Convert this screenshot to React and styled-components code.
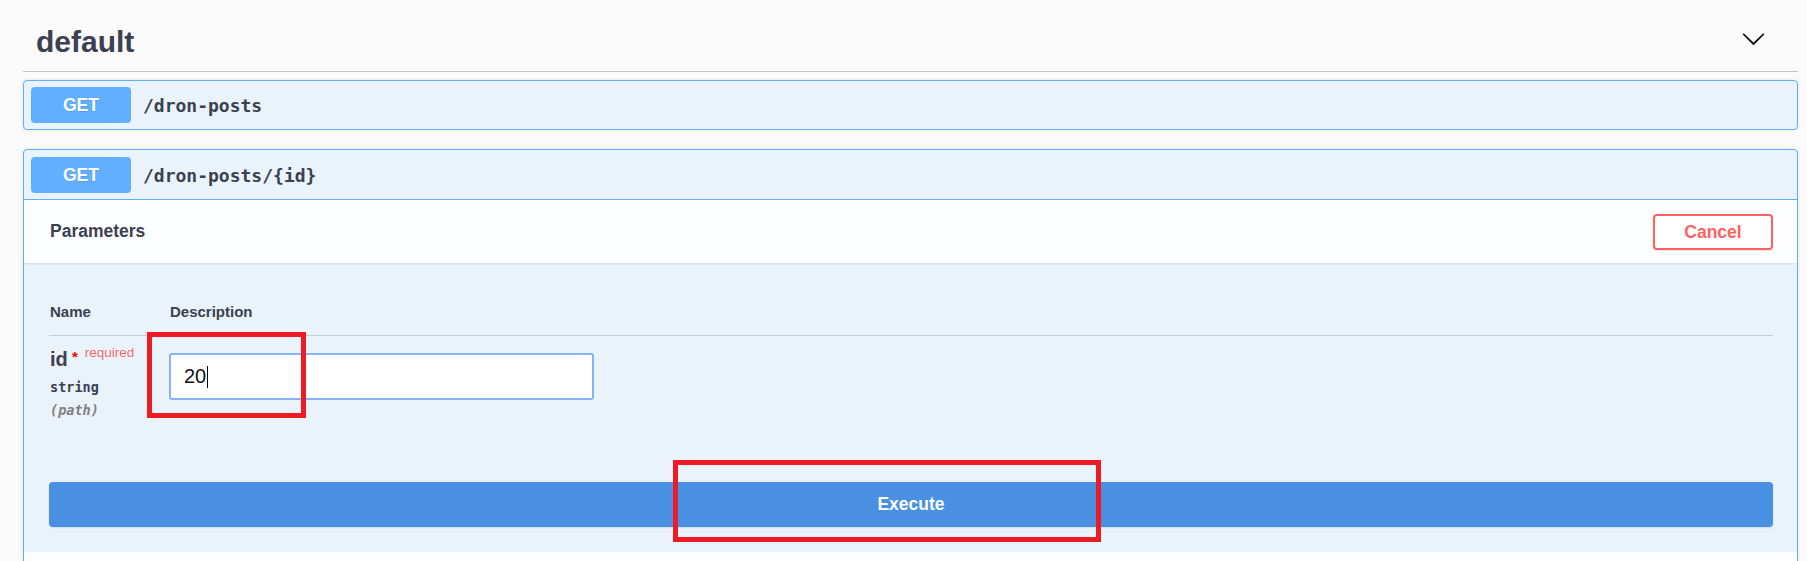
import React from 'react';
import styled, { createGlobalStyle } from 'styled-components';

const GlobalStyle = createGlobalStyle`
    html, body {
        margin: 0;
        padding: 0;
        overflow: hidden;
        background: #fafafa;
        font-family: "Liberation Sans", Arial, sans-serif;
        color: #3b4151;
    }
    * {
        box-sizing: border-box;
    }
`;

const params = [
    { name: 'id', type: 'string', location: '(path)', value: '20' },
];

export default function App() {
    return (
        <>
            <GlobalStyle />
            <Page>
                <Section>
                    <TagHeader>
                        <TagTitle>default</TagTitle>
                        <Arrow viewBox="0 0 20 20">
                            <path d="M17.418 6.109c.272-.268.709-.268.979 0s.271.701 0 .969l-7.908 7.83c-.27.268-.707.268-.979 0l-7.908-7.83c-.27-.268-.27-.701 0-.969.271-.268.709-.268.979 0L10 13.25l7.418-7.141z" />
                        </Arrow>
                    </TagHeader>

                    <OpBlock>
                        <Summary>
                            <Method>GET</Method>
                            <Path>/dron-posts</Path>
                        </Summary>
                    </OpBlock>

                    <OpBlock open>
                        <Summary open>
                            <Method>GET</Method>
                            <Path>/dron-posts/{'{id}'}</Path>
                        </Summary>

                        <SectionHeader>
                            <SectionTitle>Parameters</SectionTitle>
                            <CancelButton>Cancel</CancelButton>
                        </SectionHeader>

                        <ParamsArea>
                            <HeadRow>
                                <HeadCell>Name</HeadCell>
                                <HeadCell>Description</HeadCell>
                            </HeadRow>
                            {params.map((p, index) => (
                                <ParamRow key={index}>
                                    <NameCell>
                                        <ParamName>
                                            {p.name}
                                            <Star>&nbsp;*</Star>
                                            <Required>required</Required>
                                        </ParamName>
                                        <ParamType>{p.type}</ParamType>
                                        <ParamIn>{p.location}</ParamIn>
                                    </NameCell>
                                    <DescCell>
                                        <InputBox>
                                            {p.value}
                                            <Caret />
                                        </InputBox>
                                    </DescCell>
                                </ParamRow>
                            ))}
                            <ExecuteButton>Execute</ExecuteButton>
                        </ParamsArea>

                        <ResponsesStrip />
                    </OpBlock>
                </Section>

                {/* red annotation frames drawn over the screenshot */}
                <Mark style={{ left: 147, top: 332, width: 159, height: 86 }} />
                <Mark style={{ left: 673, top: 460, width: 428, height: 82 }} />
            </Page>
        </>
    );
}

// 스타일

const Page = styled.div`
    position: relative;
    width: 1807px;
    height: 561px;
    overflow: hidden;
`;

const Section = styled.div`
    margin-left: 23px;
    width: 1775px;
`;

const TagHeader = styled.div`
    height: 72px;
    display: flex;
    align-items: center;
    justify-content: space-between;
    padding: 12px 32px 0 13px;
    border-bottom: 1px solid rgba(59, 65, 81, 0.3);
`;

const TagTitle = styled.h3`
    margin: 0;
    font-size: 30px;
    line-height: 36px;
    font-weight: 700;
    color: #3b4151;
`;

const Arrow = styled.svg`
    width: 25px;
    height: 25px;
    align-self: flex-start;
    margin-top: 14px;
    fill: #111;
`;

const OpBlock = styled.div`
    margin-top: ${(props) => (props.open ? '19px' : '8px')};
    border: 1px solid #61affe;
    border-radius: 4px;
    background: rgba(97, 175, 254, 0.1);
    box-shadow: 0 0 3px rgba(0, 0, 0, 0.12);
    overflow: hidden;
`;

const Summary = styled.div`
    display: flex;
    align-items: center;
    padding: ${(props) => (props.open ? '7px 7px 6px' : '6px 7px')};
    border-bottom: ${(props) => (props.open ? '1px solid #61affe' : 'none')};
`;

const Method = styled.span`
    width: 100px;
    height: 36px;
    display: flex;
    align-items: center;
    justify-content: center;
    border-radius: 4px;
    background: #61affe;
    color: #fff;
    font-size: 17.5px;
    font-weight: 700;
    text-shadow: 0 1px 0 rgba(0, 0, 0, 0.1);
`;

const Path = styled.span`
    padding: 0 12px;
    font-family: "DejaVu Sans Mono", "Liberation Mono", monospace;
    font-size: 18px;
    font-weight: 600;
    color: #3b4151;
`;

const SectionHeader = styled.div`
    height: 63px;
    display: flex;
    align-items: center;
    justify-content: space-between;
    padding: 0 24px 0 26px;
    background: rgba(255, 255, 255, 0.8);
    box-shadow: 0 1px 2px rgba(0, 0, 0, 0.1);
`;

const SectionTitle = styled.h4`
    margin: 0;
    font-size: 17.5px;
    font-weight: 700;
    color: #3b4151;
`;

const CancelButton = styled.button`
    width: 120px;
    height: 36px;
    margin-top: 1px;
    border: 2px solid #ff6060;
    border-radius: 4px;
    background: #fff;
    color: #ff6060;
    font-family: "Liberation Sans", Arial, sans-serif;
    font-size: 17.5px;
    font-weight: 700;
    box-shadow: 0 1px 2px rgba(0, 0, 0, 0.1);
`;

const ParamsArea = styled.div`
    padding: 32px 24px 25px 25px;
`;

const HeadRow = styled.div`
    display: grid;
    grid-template-columns: 120px 1fr;
    padding: 8px 0 14px;
    border-bottom: 1px solid rgba(59, 65, 81, 0.2);
`;

const HeadCell = styled.div`
    font-size: 15px;
    line-height: 18px;
    font-weight: 700;
    color: #3b4151;
    padding-left: 1px;
`;

const ParamRow = styled.div`
    display: grid;
    grid-template-columns: 120px 1fr;
    align-items: start;
`;

const NameCell = styled.div`
    padding-top: 11px;
    padding-left: 1px;
`;

const ParamName = styled.div`
    height: 24px;
    font-size: 20px;
    line-height: 24px;
    font-weight: 700;
    color: #3b4151;
    white-space: nowrap;
`;

const Star = styled.span`
    position: relative;
    top: -4px;
    font-size: 15px;
    line-height: 1;
    color: red;
`;

const Required = styled.span`
    position: relative;
    top: -9px;
    padding-left: 7px;
    font-size: 13.5px;
    line-height: 1;
    font-weight: 400;
    color: rgba(255, 0, 0, 0.6);
`;

const ParamType = styled.div`
    margin-top: 6px;
    font-family: "DejaVu Sans Mono", "Liberation Mono", monospace;
    font-size: 13.5px;
    line-height: 20px;
    font-weight: 600;
    color: #3b4151;
`;

const ParamIn = styled.div`
    margin-top: 3px;
    font-family: "DejaVu Sans Mono", "Liberation Mono", monospace;
    font-size: 13.5px;
    line-height: 20px;
    font-weight: 600;
    font-style: italic;
    color: #808080;
`;

const DescCell = styled.div`
    padding-top: 17px;
`;

const InputBox = styled.div`
    width: 425px;
    height: 47px;
    display: flex;
    align-items: center;
    padding-left: 13px;
    border: 2px solid #86b3f5;
    border-radius: 3px;
    background: #fff;
    font-family: "Liberation Sans", Arial, sans-serif;
    font-size: 20px;
    color: #111;
`;

const Caret = styled.span`
    width: 1px;
    height: 22px;
    margin-left: 1px;
    background: #000;
`;

const ExecuteButton = styled.button`
    display: block;
    width: 100%;
    height: 45px;
    margin-top: 62px;
    border: none;
    border-radius: 4px;
    background: #4990e2;
    color: #fff;
    font-family: "Liberation Sans", Arial, sans-serif;
    font-size: 17.5px;
    font-weight: 700;
    box-shadow: 0 1px 2px rgba(0, 0, 0, 0.1);
`;

const ResponsesStrip = styled.div`
    height: 40px;
    background: rgba(255, 255, 255, 0.8);
`;

const Mark = styled.div`
    position: absolute;
    border: 5px solid #ed1c24;
    pointer-events: none;
`;
